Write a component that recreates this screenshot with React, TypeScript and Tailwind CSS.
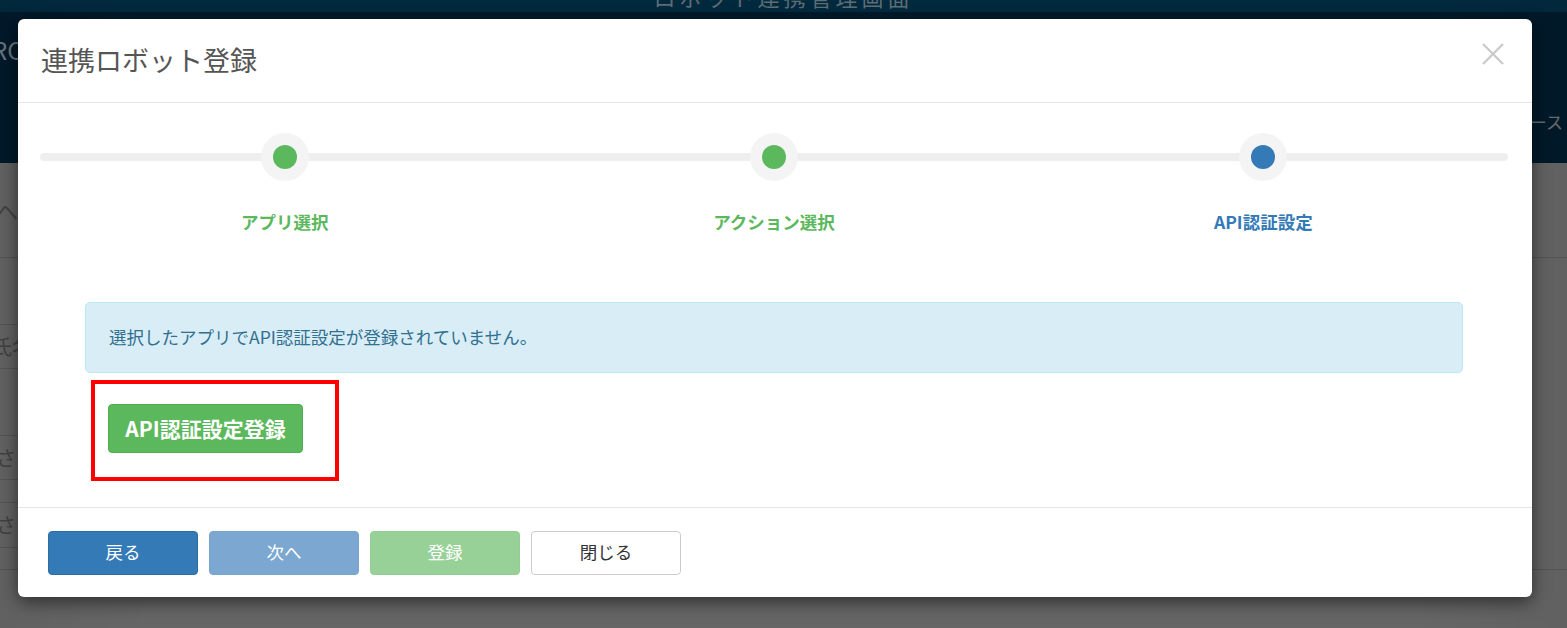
import React from "react";

const font = { fontFamily: '"Noto Sans CJK JP", "Noto Sans", sans-serif' };

function Step({ label, color, dot }: { label: string; color: string; dot: string }) {
  return (
    <div className="flex flex-col items-center">
      <div className="w-[48px] h-[48px] rounded-full bg-[#f4f4f4] flex items-center justify-center">
        <div className={`w-[24px] h-[24px] rounded-full ${dot}`} />
      </div>
      <div className={`mt-[29px] text-[17.5px] leading-[24px] font-bold ${color}`}>{label}</div>
    </div>
  );
}

export default function App() {
  return (
    <div className="relative w-[1567px] h-[628px] overflow-hidden bg-[#666]" style={font}>
      {/* background page */}
      <div className="h-[12px] bg-[#022a3f] flex justify-center">
        <div className="-mt-[20px] text-[#5f6d75] text-[22px] tracking-[4px]">ロボット連携管理画面</div>
      </div>
      <div className="h-[151px] bg-[#001a2b] flex justify-between">
        <div className="pt-[22px] -ml-[8px] text-[24px] text-[#6c7a84] leading-[32px]">RC</div>
        <div className="pt-[98px] mr-[4px] text-[17px] text-[#6b6f73] leading-[24px]">ース</div>
      </div>
      <div className="flex flex-col">
        <div className="h-[95px] border-b border-[#585858] flex items-center -ml-[4px] text-[22px] text-[#444] tracking-[10px]">ヘ・</div>
        <div className="h-[67px] w-[600px] border-b border-[#585858]" />
        <div className="h-[44px] w-[600px] border-b border-[#585858] flex items-center -ml-[8px] text-[20px] text-[#444]">氏名</div>
        <div className="h-[67px] w-[600px] border-b border-[#585858]" />
        <div className="h-[44px] w-[600px] border-b border-[#585858] flex items-center -ml-[4px] text-[20px] text-[#444]">さい</div>
        <div className="h-[23px] w-[600px] border-b border-[#585858]" />
        <div className="h-[45px] w-[600px] border-b border-[#585858] flex items-center -ml-[4px] text-[20px] text-[#444]">さい</div>
        <div className="h-[22px] border-b border-[#585858]" />
      </div>
      <div className="absolute inset-0 bg-[linear-gradient(90deg,rgba(0,0,0,0.05),rgba(0,0,0,0)_10%,rgba(0,0,0,0)_90%,rgba(0,0,0,0.05))]" />

      {/* modal */}
      <div className="absolute left-[18px] top-[19px] w-[1514px] h-[578px] bg-white rounded-[6px] shadow-[0_5px_18px_rgba(0,0,0,0.55)] flex flex-col">
        <div className="h-[84px] border-b border-[#e5e5e5] flex items-center justify-between pl-[23px] pr-[28px]">
          <div className="text-[27px] leading-[36px] text-[#555] pb-[1px]">連携ロボット登録</div>
          <svg width="22" height="22" viewBox="0 0 22 22" className="-mt-[14px]">
            <path d="M1 1 L21 21 M21 1 L1 21" stroke="#cbcbcb" strokeWidth="2.4" />
          </svg>
        </div>
        <div className="flex-1 flex flex-col px-[22px] pt-[30px]">
          <div className="relative w-[1468px]">
            <div className="absolute left-0 right-0 top-[20px] h-[8px] rounded-full bg-[#eeeeee]" />
            <div className="relative grid grid-cols-3">
              <Step label="アプリ選択" color="text-[#5cb85c]" dot="bg-[#5cb85c]" />
              <Step label="アクション選択" color="text-[#5cb85c]" dot="bg-[#5cb85c]" />
              <Step label="API認証設定" color="text-[#337ab7]" dot="bg-[#337ab7]" />
            </div>
          </div>
          <div className="mt-[68px] ml-[45px] mr-[47px] h-[71px] bg-[#d9edf7] border border-[#bce8f1] rounded-[5px] flex items-center pl-[23px] text-[17.5px] text-[#31708f]">
            選択したアプリでAPI認証設定が登録されていません。
          </div>
          <div className="mt-[7px] ml-[51px] w-[248px] h-[101px] border-[4px] border-[#ff0000] pt-[20px] pl-[13px]">
            <button className="w-[195px] h-[49px] rounded-[4px] bg-[#5cb85c] border border-[#4cae4c] text-white text-[21px] font-bold leading-none">
              API認証設定登録
            </button>
          </div>
        </div>
        <div className="h-[90px] border-t border-[#e5e5e5] flex items-center gap-[11px] pl-[30px]">
          <button className="w-[150px] h-[44px] rounded-[4px] bg-[#337ab7] border border-[#2e6da4] text-white text-[17.5px]">戻る</button>
          <button className="w-[150px] h-[44px] rounded-[4px] bg-[#7ba7d1] border border-[#78a3cb] text-white text-[17.5px]">次へ</button>
          <button className="w-[150px] h-[44px] rounded-[4px] bg-[#97d197] border border-[#92cd92] text-white text-[17.5px]">登録</button>
          <button className="w-[150px] h-[44px] rounded-[4px] bg-white border border-[#cccccc] text-[#333] text-[17.5px]">閉じる</button>
        </div>
      </div>
    </div>
  );
}
